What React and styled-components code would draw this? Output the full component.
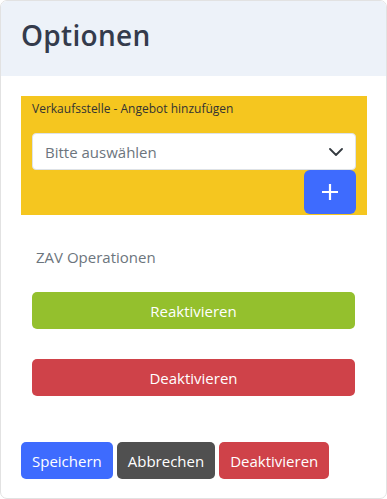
import React from 'react';
import styled, { createGlobalStyle } from 'styled-components';

const GlobalStyle = createGlobalStyle`
  html, body {
    margin: 0;
    padding: 0;
    background: #ffffff;
  }
  * {
    box-sizing: border-box;
  }
`;

const palette = {
  blue: '#3e6bfe',
  green: '#94c02d',
  red: '#cf4249',
  dark: '#505050',
  yellow: '#f5c61f'
};

export default class App extends React.Component {
  state = {
    selection: ''
  }

  render(){
    return(
      <>
        <GlobalStyle />
        <Card>
          <Header>
            <Title>Optionen</Title>
          </Header>
          <Body>
            <AddPanel>
              <PanelLabel>Verkaufsstelle - Angebot hinzufügen</PanelLabel>
              <SelectBox>
                <SelectText>Bitte auswählen</SelectText>
                <svg width="14" height="8" viewBox="0 0 14 8">
                  <path d="M1 1l6 6 6-6" fill="none" stroke="#343a40" strokeWidth="1.8" strokeLinecap="round" strokeLinejoin="round"/>
                </svg>
              </SelectBox>
              <PlusRow>
                <PlusButton>
                  <svg width="18" height="18" viewBox="0 0 18 18">
                    <path d="M9 1v16M1 9h16" stroke="#ffffff" strokeWidth="2.2"/>
                  </svg>
                </PlusButton>
              </PlusRow>
            </AddPanel>

            <SectionLabel>ZAV Operationen</SectionLabel>
            <WideButton color={palette.green}>Reaktivieren</WideButton>
            <WideButton color={palette.red}>Deaktivieren</WideButton>

            <Footer>
              <Button color={palette.blue}>Speichern</Button>
              <Button color={palette.dark}>Abbrechen</Button>
              <Button color={palette.red}>Deaktivieren</Button>
            </Footer>
          </Body>
        </Card>
      </>
    )
  }
}

const Card = styled.div`
  width: 387px;
  height: 499px;
  border: 1px solid #e2e2e2;
  border-radius: 7px;
  overflow: hidden;
  background: #ffffff;
  font-family: "Open Sans", "Noto Sans", sans-serif;
`;

const Header = styled.div`
  height: 75px;
  background: #edf2f9;
  padding: 16px 20px 0;
`;

const Title = styled.h1`
  margin: 0;
  font-size: 28px;
  font-weight: 600;
  line-height: 36px;
  color: #343b4c;
  letter-spacing: 0.3px;
`;

const Body = styled.div`
  padding: 20px 19px 0 20px;
`;

const AddPanel = styled.div`
  background: ${palette.yellow};
  padding: 5px 11px 0 11px;
  height: 119px;
`;

const PanelLabel = styled.div`
  font-size: 12px;
  line-height: 16px;
  color: #333333;
  margin-bottom: 16px;
`;

const SelectBox = styled.div`
  height: 37px;
  background: #ffffff;
  border: 1px solid #dee2e6;
  border-radius: 4px;
  display: flex;
  align-items: center;
  justify-content: space-between;
  padding: 0 12px 0 12px;
`;

const SelectText = styled.span`
  font-size: 15px;
  color: #6c757d;
`;

const PlusRow = styled.div`
  display: flex;
  justify-content: flex-end;
`;

const PlusButton = styled.div`
  width: 52px;
  height: 44px;
  background: ${palette.blue};
  border-radius: 6px;
  display: flex;
  align-items: center;
  justify-content: center;
`;

const SectionLabel = styled.div`
  font-size: 15px;
  color: #6c757d;
  margin: 32px 0 0 15px;
  line-height: 20px;
`;

const WideButton = styled.div`
  margin: 25px 12px 0 11px;
  height: 37px;
  border-radius: 5px;
  background: ${props => props.color};
  color: #ffffff;
  font-size: 15px;
  display: flex;
  align-items: center;
  justify-content: center;
  & + & {
    margin-top: 30px;
  }
`;

const Footer = styled.div`
  display: flex;
  gap: 4px;
  margin-top: 46px;
`;

const Button = styled.div`
  height: 37px;
  padding: 0 11px;
  border-radius: 5px;
  background: ${props => props.color};
  color: #ffffff;
  font-size: 15px;
  display: flex;
  align-items: center;
`;
